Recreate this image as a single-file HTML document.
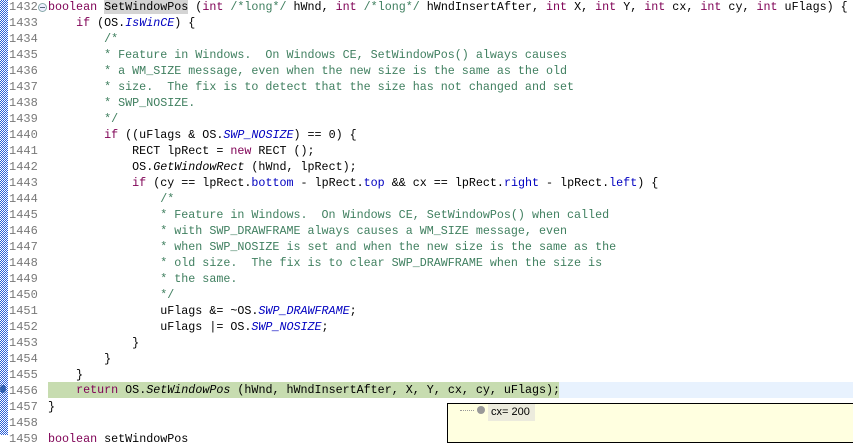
<!DOCTYPE html><html><head><style>
body{margin:0;width:853px;height:435px;overflow:hidden;background:#fff;position:relative;font-family:"Liberation Mono",monospace;font-size:11.7px}
.strip{position:absolute;left:0;top:0;width:8px;height:435px;background:repeating-conic-gradient(#2a5fd8 0 25%,#fff 0 50%) 0 0/2px 2px}
.ln{position:absolute;left:9px;width:30px;color:#787878;height:16px;line-height:16px;font-size:12px}
.cd{position:absolute;left:48px;white-space:pre;height:16px;line-height:16px;color:#000}
.k{color:#7f0055}.c{color:#3f7f5f}.s{color:#0000c0;font-style:italic}.f{color:#0000c0}.i{font-style:italic}
.hl{position:absolute;left:48px;top:382px;height:16px;width:511px;background:#c7dcb0}
.hl2{position:absolute;left:559px;top:382px;height:16px;width:294px;background:#e8f2fe}
.tip{position:absolute;left:447px;top:403px;width:410px;height:40px;background:#ffffe0;border:1px solid #000;box-sizing:border-box}
</style></head><body>
<div class="strip"></div>
<div class="hl"></div><div class="hl2"></div>
<div style="position:absolute;left:38px;top:3px;width:9px;height:9px;border:1px solid #8aa;border-radius:50%;box-sizing:border-box;background:#eef"><div style="position:absolute;left:1px;top:3px;width:5px;height:1px;background:#567"></div></div>
<div class="ln" style="top:-1px">1432</div><div class="cd" style="top:-1px"><span class="k">boolean</span> <span style="background:#d4d4d4">SetWindowPos</span> (<span class="k">int</span> <span class="c">/*long*/</span> hWnd, <span class="k">int</span> <span class="c">/*long*/</span> hWndInsertAfter, <span class="k">int</span> X, <span class="k">int</span> Y, <span class="k">int</span> cx, <span class="k">int</span> cy, <span class="k">int</span> uFlags) {</div>
<div class="ln" style="top:15px">1433</div><div class="cd" style="top:15px">    <span class="k">if</span> (OS.<span class="s">IsWinCE</span>) {</div>
<div class="ln" style="top:31px">1434</div><div class="cd c" style="top:31px">        /*</div>
<div class="ln" style="top:47px">1435</div><div class="cd c" style="top:47px">        * Feature in Windows.  On Windows CE, SetWindowPos() always causes</div>
<div class="ln" style="top:63px">1436</div><div class="cd c" style="top:63px">        * a WM_SIZE message, even when the new size is the same as the old</div>
<div class="ln" style="top:79px">1437</div><div class="cd c" style="top:79px">        * size.  The fix is to detect that the size has not changed and set</div>
<div class="ln" style="top:95px">1438</div><div class="cd c" style="top:95px">        * SWP_NOSIZE.</div>
<div class="ln" style="top:111px">1439</div><div class="cd c" style="top:111px">        */</div>
<div class="ln" style="top:127px">1440</div><div class="cd" style="top:127px">        <span class="k">if</span> ((uFlags &amp; OS.<span class="s">SWP_NOSIZE</span>) == 0) {</div>
<div class="ln" style="top:143px">1441</div><div class="cd" style="top:143px">            RECT lpRect = <span class="k">new</span> RECT ();</div>
<div class="ln" style="top:159px">1442</div><div class="cd" style="top:159px">            OS.<span class="i">GetWindowRect</span> (hWnd, lpRect);</div>
<div class="ln" style="top:175px">1443</div><div class="cd" style="top:175px">            <span class="k">if</span> (cy == lpRect.<span class="f">bottom</span> - lpRect.<span class="f">top</span> &amp;&amp; cx == lpRect.<span class="f">right</span> - lpRect.<span class="f">left</span>) {</div>
<div class="ln" style="top:191px">1444</div><div class="cd c" style="top:191px">                /*</div>
<div class="ln" style="top:207px">1445</div><div class="cd c" style="top:207px">                * Feature in Windows.  On Windows CE, SetWindowPos() when called</div>
<div class="ln" style="top:223px">1446</div><div class="cd c" style="top:223px">                * with SWP_DRAWFRAME always causes a WM_SIZE message, even</div>
<div class="ln" style="top:239px">1447</div><div class="cd c" style="top:239px">                * when SWP_NOSIZE is set and when the new size is the same as the</div>
<div class="ln" style="top:255px">1448</div><div class="cd c" style="top:255px">                * old size.  The fix is to clear SWP_DRAWFRAME when the size is</div>
<div class="ln" style="top:271px">1449</div><div class="cd c" style="top:271px">                * the same.</div>
<div class="ln" style="top:287px">1450</div><div class="cd c" style="top:287px">                */</div>
<div class="ln" style="top:303px">1451</div><div class="cd" style="top:303px">                uFlags &amp;= ~OS.<span class="s">SWP_DRAWFRAME</span>;</div>
<div class="ln" style="top:319px">1452</div><div class="cd" style="top:319px">                uFlags |= OS.<span class="s">SWP_NOSIZE</span>;</div>
<div class="ln" style="top:335px">1453</div><div class="cd" style="top:335px">            }</div>
<div class="ln" style="top:351px">1454</div><div class="cd" style="top:351px">        }</div>
<div class="ln" style="top:367px">1455</div><div class="cd" style="top:367px">    }</div>
<div class="ln" style="top:383px">1456</div><div class="cd" style="top:382px">    <span class="k">return</span> OS.<span class="i">SetWindowPos</span> (hWnd, hWndInsertAfter, X, Y, cx, cy, uFlags);</div>
<div class="ln" style="top:399px">1457</div><div class="cd" style="top:399px">}</div>
<div class="ln" style="top:415px">1458</div>
<div class="ln" style="top:431px">1459</div><div class="cd" style="top:431px"><span class="k">boolean</span> setWindowPos</div>
<div style="position:absolute;left:0;top:385px;width:6px;height:8px;border-radius:50%;background:#3060b0"></div>
<div class="tip">
<div style="position:absolute;left:12px;top:6px;width:14px;border-top:1px dotted #999"></div>
<div style="position:absolute;left:29px;top:2px;width:8px;height:8px;border-radius:50%;background:#999"></div>
<div style="position:absolute;left:40px;top:0;width:47px;height:17px;background:#ecebdd;font-family:'Liberation Sans',sans-serif;font-size:11px;line-height:17px;padding-left:3px;box-sizing:border-box">cx= 200</div>
</div>
</body></html>
